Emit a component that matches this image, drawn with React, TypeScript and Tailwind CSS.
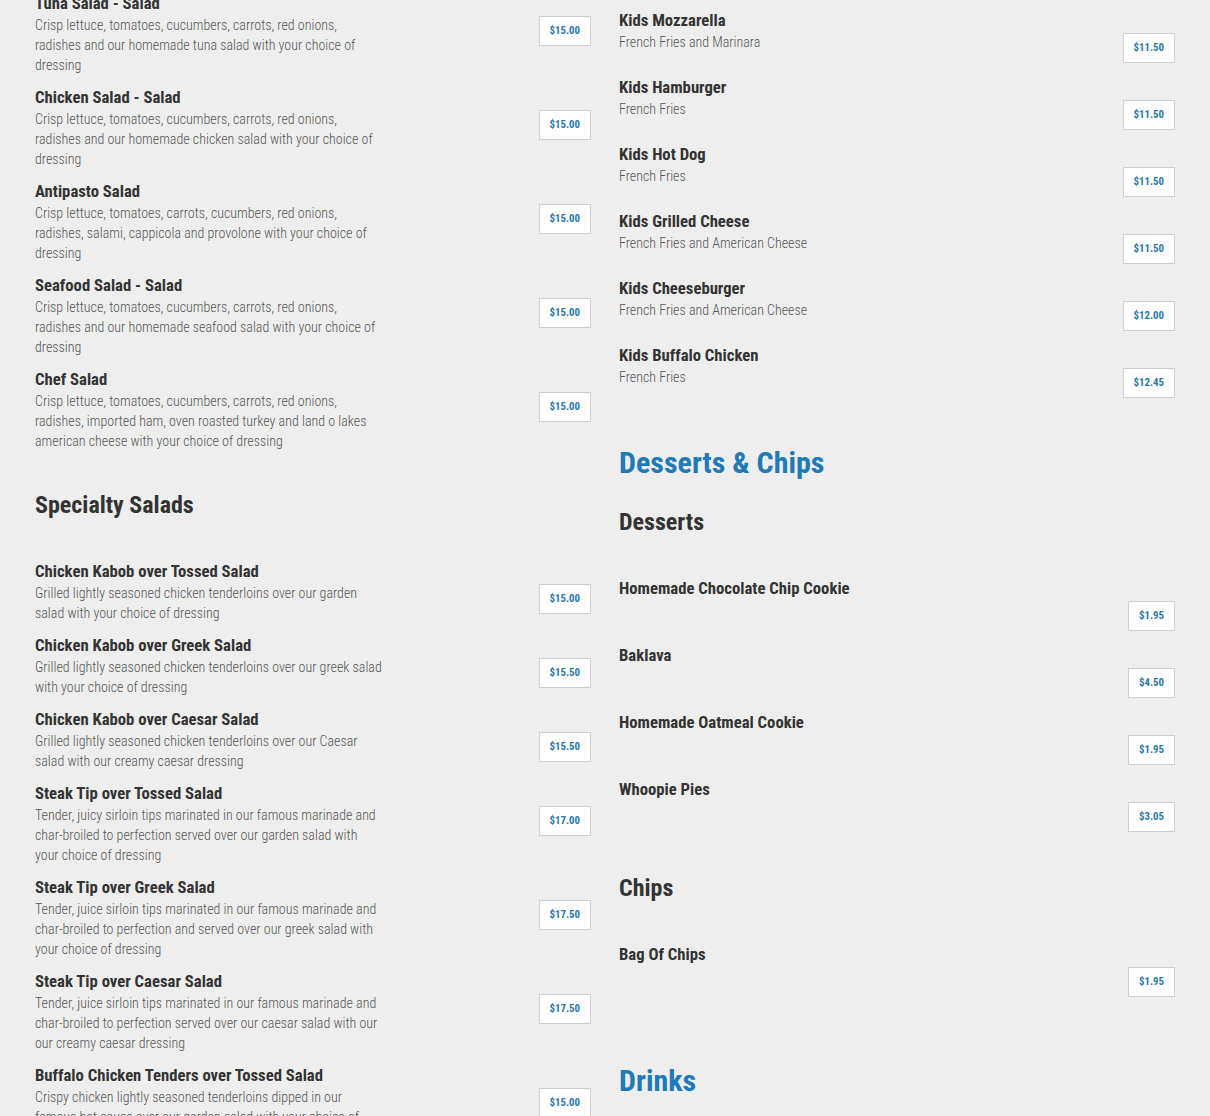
import React from 'react';

type Item = { name: string; desc?: string; price: string };

const salads: Item[] = [
  { name: 'Tuna Salad - Salad', desc: 'Crisp lettuce, tomatoes, cucumbers, carrots, red onions, radishes and our homemade tuna salad with your choice of dressing', price: '$15.00' },
  { name: 'Chicken Salad - Salad', desc: 'Crisp lettuce, tomatoes, cucumbers, carrots, red onions, radishes and our homemade chicken salad with your choice of dressing', price: '$15.00' },
  { name: 'Antipasto Salad', desc: 'Crisp lettuce, tomatoes, carrots, cucumbers, red onions, radishes, salami, cappicola and provolone with your choice of dressing', price: '$15.00' },
  { name: 'Seafood Salad - Salad', desc: 'Crisp lettuce, tomatoes, cucumbers, carrots, red onions, radishes and our homemade seafood salad with your choice of dressing', price: '$15.00' },
  { name: 'Chef Salad', desc: 'Crisp lettuce, tomatoes, cucumbers, carrots, red onions, radishes, imported ham, oven roasted turkey and land o lakes american cheese with your choice of dressing', price: '$15.00' },
];

const specialty: Item[] = [
  { name: 'Chicken Kabob over Tossed Salad', desc: 'Grilled lightly seasoned chicken tenderloins over our garden salad with your choice of dressing', price: '$15.00' },
  { name: 'Chicken Kabob over Greek Salad', desc: 'Grilled lightly seasoned chicken tenderloins over our greek salad with your choice of dressing', price: '$15.50' },
  { name: 'Chicken Kabob over Caesar Salad', desc: 'Grilled lightly seasoned chicken tenderloins over our Caesar salad with our creamy caesar dressing', price: '$15.50' },
  { name: 'Steak Tip over Tossed Salad', desc: 'Tender, juicy sirloin tips marinated in our famous marinade and char-broiled to perfection served over our garden salad with your choice of dressing', price: '$17.00' },
  { name: 'Steak Tip over Greek Salad', desc: 'Tender, juice sirloin tips marinated in our famous marinade and char-broiled to perfection and served over our greek salad with your choice of dressing', price: '$17.50' },
  { name: 'Steak Tip over Caesar Salad', desc: 'Tender, juice sirloin tips marinated in our famous marinade and char-broiled to perfection served over our caesar salad with our our creamy caesar dressing', price: '$17.50' },
  { name: 'Buffalo Chicken Tenders over Tossed Salad', desc: 'Crispy chicken lightly seasoned tenderloins dipped in our famous hot sauce over our garden salad with your choice of dressing', price: '$15.00' },
];

const kids: Item[] = [
  { name: 'Kids Mozzarella', desc: 'French Fries and Marinara', price: '$11.50' },
  { name: 'Kids Hamburger', desc: 'French Fries', price: '$11.50' },
  { name: 'Kids Hot Dog', desc: 'French Fries', price: '$11.50' },
  { name: 'Kids Grilled Cheese', desc: 'French Fries and American Cheese', price: '$11.50' },
  { name: 'Kids Cheeseburger', desc: 'French Fries and American Cheese', price: '$12.00' },
  { name: 'Kids Buffalo Chicken', desc: 'French Fries', price: '$12.45' },
];

const desserts: Item[] = [
  { name: 'Homemade Chocolate Chip Cookie', price: '$1.95' },
  { name: 'Baklava', price: '$4.50' },
  { name: 'Homemade Oatmeal Cookie', price: '$1.95' },
  { name: 'Whoopie Pies', price: '$3.05' },
];

const chips: Item[] = [{ name: 'Bag Of Chips', price: '$1.95' }];

const MenuItem = ({ item }: { item: Item }) => (
  <div className="flex justify-between items-start mb-3">
    <div className="w-[348px]">
      <h4 className="text-[16.7px] leading-[23px] font-bold text-[#333]">{item.name}</h4>
      {item.desc && (
        <p className="-mb-[1px] text-[14px] leading-[20px] font-light text-[#555]">{item.desc}</p>
      )}
    </div>
    <div className="pt-[24px] pb-[1px]">
      <div className="h-[30px] px-[10px] flex items-center bg-white border border-[#cfcfcf] text-[10.8px] font-bold text-[#2a78a8]">
        {item.price}
      </div>
    </div>
  </div>
);

export default function App() {
  return (
    <div
      className="min-h-screen bg-[#eeeeee] overflow-hidden h-[1116px]"
      style={{ fontFamily: '"Roboto Condensed", "Liberation Sans Narrow", sans-serif' }}
    >
      <div className="grid grid-cols-2 gap-[28px] px-[35px] -mt-[8px]">
        {/* Left column */}
        <div>
          {salads.map((it) => (
            <MenuItem key={it.name} item={it} />
          ))}
          <h3 className="mt-[39px] mb-[39px] text-[24px] leading-[32px] font-bold text-[#333]">Specialty Salads</h3>
          {specialty.map((it) => (
            <MenuItem key={it.name} item={it} />
          ))}
        </div>

        {/* Right column */}
        <div className="pt-[17px]">
          {kids.map((it) => (
            <MenuItem key={it.name} item={it} />
          ))}
          <h2 className="mt-[46px] text-[30px] leading-[36px] font-bold text-[#1f7ab8]">Desserts &amp; Chips</h2>
          <h3 className="mt-[25px] mb-[39px] text-[24px] leading-[32px] font-bold text-[#333]">Desserts</h3>
          {desserts.map((it) => (
            <MenuItem key={it.name} item={it} />
          ))}
          <h3 className="mt-[39px] mb-[39px] text-[24px] leading-[32px] font-bold text-[#333]">Chips</h3>
          {chips.map((it) => (
            <MenuItem key={it.name} item={it} />
          ))}
          <h2 className="mt-[65px] text-[30px] leading-[36px] font-bold text-[#1f7ab8]">Drinks</h2>
        </div>
      </div>
    </div>
  );
}
